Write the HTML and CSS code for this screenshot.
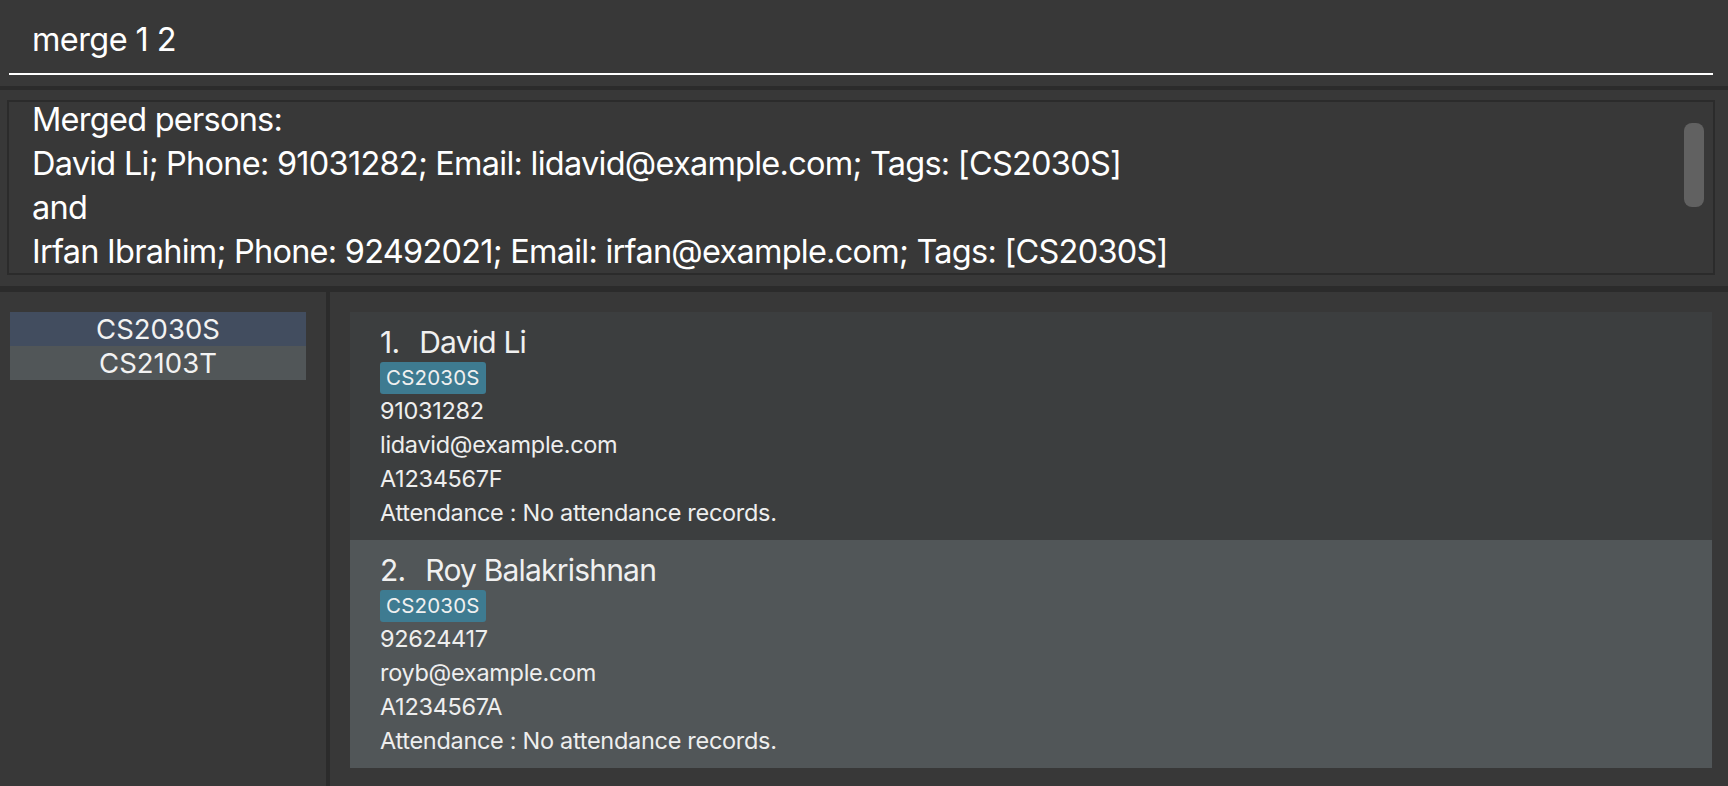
FILE: index.html
```html
<!DOCTYPE html>
<html>
<head>
<meta charset="utf-8">
<link rel="stylesheet" href="styles.css">
</head>
<body>
<div class="app">
  <div class="command">
    <div class="command-field">merge 1 2</div>
  </div>
  <div class="hsep top"></div>
  <div class="result-area">
    <div class="result-box">
      <div class="result-text">
        <div>Merged persons:</div>
        <div>David Li; Phone: 91031282; Email: lidavid@example.com; Tags: [CS2030S]</div>
        <div>and</div>
        <div>Irfan Ibrahim; Phone: 92492021; Email: irfan@example.com; Tags: [CS2030S]</div>
      </div>
      <div class="scroll-thumb"></div>
    </div>
  </div>
  <div class="hsep mid"></div>
  <div class="main">
    <div class="side">
      <ul class="tag-list">
        <li class="selected">CS2030S</li>
        <li class="odd">CS2103T</li>
      </ul>
    </div>
    <div class="vsep"></div>
    <div class="persons">
      <div class="card even">
        <div class="name"><span class="num">1.</span>David Li</div>
        <div class="tags"><span class="tag">CS2030S</span></div>
        <div class="detail">91031282</div>
        <div class="detail">lidavid@example.com</div>
        <div class="detail">A1234567F</div>
        <div class="detail">Attendance : No attendance records.</div>
      </div>
      <div class="card odd">
        <div class="name"><span class="num">2.</span>Roy Balakrishnan</div>
        <div class="tags"><span class="tag">CS2030S</span></div>
        <div class="detail">92624417</div>
        <div class="detail">royb@example.com</div>
        <div class="detail">A1234567A</div>
        <div class="detail">Attendance : No attendance records.</div>
      </div>
    </div>
  </div>
</div>
</body>
</html>
```
FILE: styles.css
```css
* { box-sizing: border-box; }
html, body {
  margin: 0;
  padding: 0;
  background: #383838;
  height: 786px;
  overflow: hidden;
}
body {
  font-family: Inter, "Noto Sans", sans-serif;
  color: #ffffff;
}
.app {
  display: flex;
  flex-direction: column;
  height: 786px;
}
.command {
  height: 86px;
  padding: 0 15px 0 9px;
}
.command-field {
  height: 75px;
  border-bottom: 2px solid #ffffff;
  padding: 20px 0 0 23px;
  font-size: 32.5px;
  line-height: 40px;
  letter-spacing: -0.6px;
  color: #ffffff;
}
.hsep {
  background: #2b2b2b;
  flex: none;
}
.hsep.top { height: 4px; }
.hsep.mid { height: 6px; }
.result-area {
  height: 196px;
  padding: 10px 13px 11px 7px;
}
.result-box {
  position: relative;
  height: 175px;
  border: 2px solid #2b2b2b;
  overflow: hidden;
  padding-left: 23px;
}
.result-text {
  margin-top: -4px;
  font-size: 32.5px;
  line-height: 44px;
  letter-spacing: -0.75px;
  white-space: nowrap;
}
.scroll-thumb {
  position: absolute;
  right: 9px;
  top: 21px;
  width: 20px;
  height: 84px;
  border-radius: 8px;
  background: #616161;
}
.main {
  flex: 1;
  display: flex;
  min-height: 0;
}
.side {
  width: 326px;
  flex: none;
  padding: 20px 20px 0 10px;
}
.tag-list {
  list-style: none;
  margin: 0;
  padding: 0;
}
.tag-list li {
  height: 34px;
  line-height: 34px;
  text-align: center;
  font-size: 27.5px;
  color: #f2f2f2;
  background: #3c3e3f;
}
.tag-list li.selected { background: #424d5f; }
.tag-list li.odd { background: #515658; }
.vsep {
  width: 4px;
  flex: none;
  background: #2b2b2b;
}
.persons {
  flex: 1;
  padding: 20px 16px 0 20px;
}
.card {
  height: 228px;
  padding: 12px 0 0 30px;
  color: #eeeeee;
}
.card.even { background: #3c3e3f; }
.card.odd { background: #515658; }
.name {
  font-size: 30px;
  line-height: 36px;
  letter-spacing: -0.8px;
  color: #f0f0f0;
}
.num {
  display: inline-block;
  margin-right: 20px;
}
.tags {
  display: flex;
  margin-top: 2px;
  height: 32px;
}
.tag {
  display: inline-block;
  height: 32px;
  line-height: 32px;
  padding: 0 6px;
  font-size: 20.5px;
  letter-spacing: 0.2px;
  background: #3e7b91;
  border-radius: 3px;
  color: #f0f0f0;
}
.detail {
  font-size: 23.5px;
  line-height: 34px;
  letter-spacing: -0.3px;
}
```
